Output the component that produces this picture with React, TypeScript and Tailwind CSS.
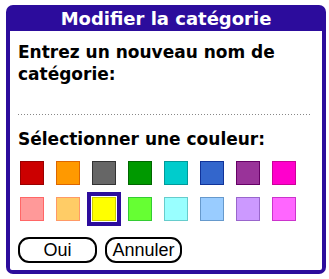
const colors = [
  { bg: 'bg-[#cc0000]', bd: 'border-[#990000]' },
  { bg: 'bg-[#ff9900]', bd: 'border-[#dd6600]' },
  { bg: 'bg-[#666666]', bd: 'border-[#333333]' },
  { bg: 'bg-[#009900]', bd: 'border-[#006600]' },
  { bg: 'bg-[#00cccc]', bd: 'border-[#009999]' },
  { bg: 'bg-[#3366cc]', bd: 'border-[#113399]' },
  { bg: 'bg-[#993399]', bd: 'border-[#660066]' },
  { bg: 'bg-[#ff00cc]', bd: 'border-[#cc0099]' },
  { bg: 'bg-[#ff9999]', bd: 'border-[#ff6666]' },
  { bg: 'bg-[#ffcc66]', bd: 'border-[#ff9966]' },
  { bg: 'bg-[#ffff00]', bd: 'border-[#cccc00]', selected: true },
  { bg: 'bg-[#66ff33]', bd: 'border-[#33cc33]' },
  { bg: 'bg-[#99ffff]', bd: 'border-[#66cccc]' },
  { bg: 'bg-[#99ccff]', bd: 'border-[#6699cc]' },
  { bg: 'bg-[#cc99ff]', bd: 'border-[#9966cc]' },
  { bg: 'bg-[#ff66ff]', bd: 'border-[#cc33cc]' },
];

export default function App() {
  return (
    <div className="w-[329px] h-[279px] bg-white pt-[5px] pl-[6px] font-['DejaVu_Sans',Verdana,sans-serif] text-black">
      <div className="w-[320px] h-[269px] rounded-[7px] bg-[#2c0c9c] px-[4px] pb-[4px] flex flex-col">
        {/* Title */}
        <div className="h-[26px] flex items-center justify-center text-white font-bold text-[18px] leading-none pt-[1px]">
          Modifier la catégorie
        </div>

        {/* Body */}
        <div className="flex-1 bg-white rounded-b-[2px] pl-[8px] pt-[10px]">
          <p className="font-bold text-[17px] leading-[22px]">
            Entrez un nouveau nom de
            <br />
            catégorie:
          </p>

          <div className="mt-[29px] w-[294px] h-px bg-[repeating-linear-gradient(90deg,#888_0_1px,transparent_1px_3px)]" />

          <p className="mt-[13px] font-bold text-[17px] leading-[22px]">Sélectionner une couleur:</p>

          <div className="mt-[11px] ml-[2px] grid grid-cols-[repeat(8,24px)] gap-x-[12px] gap-y-[12px]">
            {colors.map((c, i) => (
              <div
                key={i}
                className={`w-[24px] h-[24px] border ${c.bg} ${c.bd} ${
                  c.selected ? 'outline-[4px] outline-solid outline-[#2c0c9c] outline-offset-[1px]' : ''
                }`}
              />
            ))}
          </div>

          <div className="mt-[16px] flex gap-[8px] font-['Liberation_Sans',Arial,sans-serif]">
            <button className="w-[79px] h-[26px] border-2 border-black rounded-[11px] text-[18px] leading-none flex items-center justify-center">
              Oui
            </button>
            <button className="w-[77px] h-[26px] border-2 border-black rounded-[11px] text-[18px] leading-none flex items-center justify-center">
              Annuler
            </button>
          </div>
        </div>
      </div>
    </div>
  );
}
